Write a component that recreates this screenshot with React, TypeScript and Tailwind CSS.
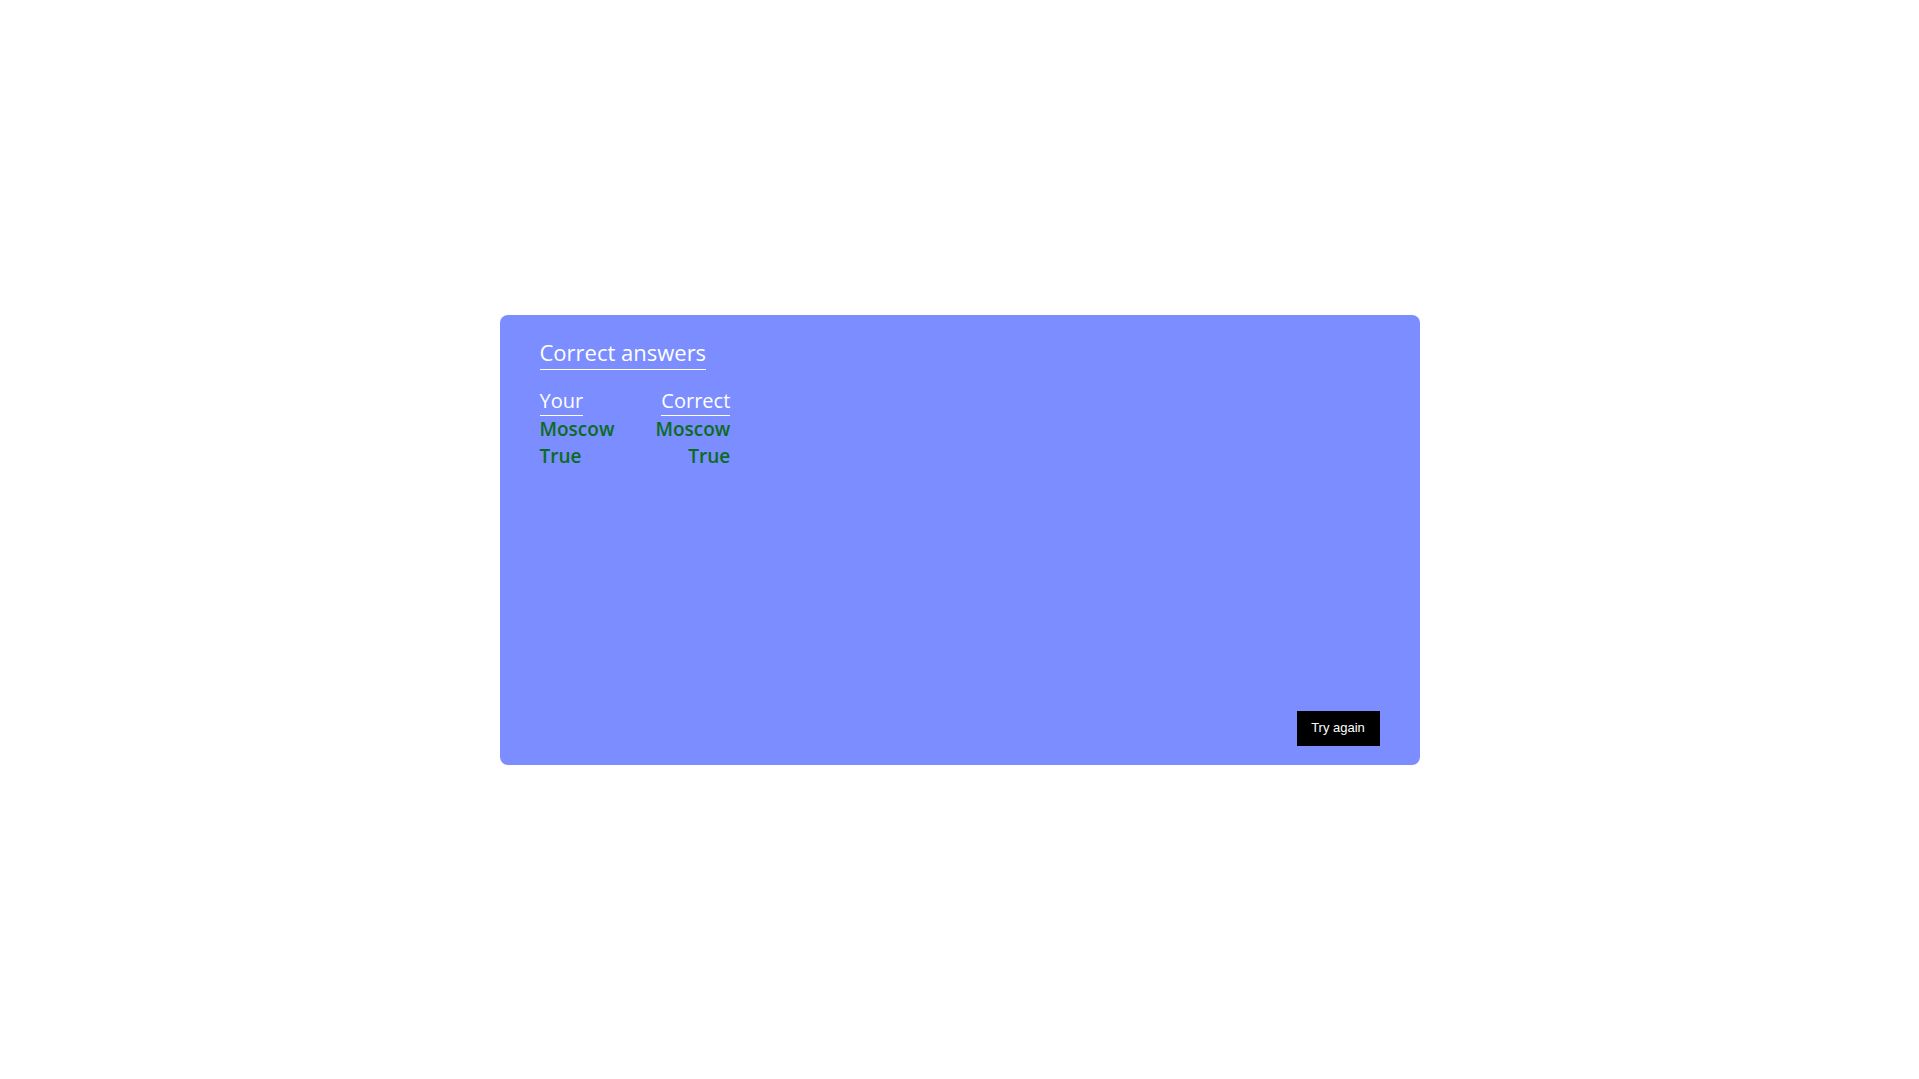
const ROWS = [
  { yours: 'Moscow', correct: 'Moscow' },
  { yours: 'True', correct: 'True' },
]

export default function App() {
  return (
    <main className="min-h-screen w-full bg-white flex items-center justify-center font-['Open_Sans',sans-serif]">
      <section className="w-[920px] h-[450px] rounded-lg bg-[#7b8dff] flex flex-col px-10 pt-[22px] pb-[19px]">
        <h1 className="self-start text-[22px] leading-[30px] text-white border-b border-white pb-[2px]">
          Correct answers
        </h1>

        <div className="mt-[17px] self-start grid grid-cols-[auto_auto] gap-x-[41px]">
          <span className="justify-self-start pb-[1px] text-[20px] leading-[27px] text-white border-b border-white">
            Your
          </span>
          <span className="justify-self-end pb-[1px] text-[20px] leading-[27px] text-white border-b border-white">
            Correct
          </span>
          {ROWS.map((row) => (
            <div key={row.yours} className="contents">
              <span className="text-[19px] leading-[27px] font-semibold text-[#0b6b1d]">{row.yours}</span>
              <span className="text-right text-[19px] leading-[27px] font-semibold text-[#0b6b1d]">{row.correct}</span>
            </div>
          ))}
        </div>

        <div className="mt-auto flex justify-end">
          <button className="h-[35px] w-[83px] bg-black text-white text-[13px] font-['Liberation_Sans',sans-serif]">
            Try again
          </button>
        </div>
      </section>
    </main>
  )
}
